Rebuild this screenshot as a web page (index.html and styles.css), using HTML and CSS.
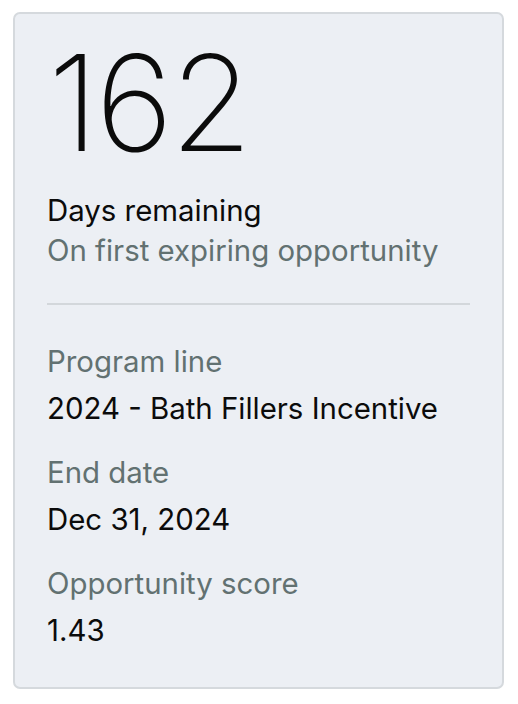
FILE: index.html
```html
<!DOCTYPE html>
<html>
<head>
<meta charset="utf-8">
<link rel="stylesheet" href="styles.css">
</head>
<body>
<div class="card">
  <div class="big">162</div>
  <div class="title">Days remaining</div>
  <div class="sub">On first expiring opportunity</div>
  <hr class="divider">
  <div class="field">
    <div class="label">Program line</div>
    <div class="value">2024 - Bath Fillers Incentive</div>
  </div>
  <div class="field">
    <div class="label">End date</div>
    <div class="value">Dec 31, 2024</div>
  </div>
  <div class="field">
    <div class="label">Opportunity score</div>
    <div class="value">1.43</div>
  </div>
</div>
</body>
</html>
```
FILE: styles.css
```css
html, body {
  margin: 0;
  padding: 0;
  background: #ffffff;
}
body {
  font-family: "Inter", "Liberation Sans", sans-serif;
  color: #0b0b0b;
}
.card {
  box-sizing: border-box;
  margin: 12px 0 0 13px;
  width: 491px;
  height: 677px;
  background: #eceff4;
  border: 2px solid #d5d9dd;
  border-radius: 7px;
  padding: 14px 32px 0 32px;
}
.big {
  font-weight: 200;
  font-size: 133px;
  line-height: 150px;
  letter-spacing: -3px;
  margin-left: 1px;
}
.title {
  font-size: 29.4px;
  line-height: 40px;
  margin-top: 13px;
}
.sub {
  font-size: 29.4px;
  line-height: 40px;
  color: #627171;
}
.divider {
  border: 0;
  height: 2px;
  background: #d3d7db;
  margin: 32px 0 0 0;
  width: 423px;
}
.field {
  margin-top: 33px;
}
.field + .field {
  margin-top: 16px;
}
.label {
  font-size: 29.4px;
  line-height: 47px;
  color: #627171;
}
.value {
  font-size: 29.4px;
  line-height: 48px;
}
```
